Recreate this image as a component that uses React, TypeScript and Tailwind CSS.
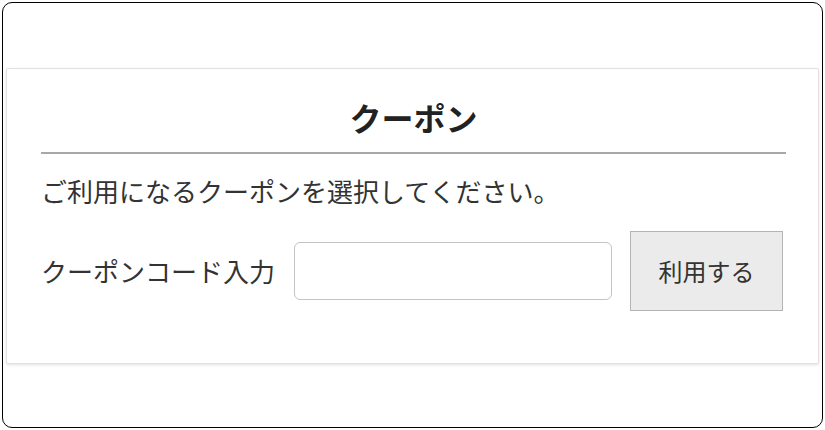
import React from "react";

export default function App() {
  return (
    <div
      className="w-[825px] h-[430px] bg-white p-[2px]"
      style={{ fontFamily: '"Noto Sans CJK JP", "Noto Sans", sans-serif' }}
    >
      <div className="h-full w-full rounded-[10px] border border-black pt-[65px] px-[3px]">
        <div className="border border-[#e2e2e2] rounded-[2px] shadow-[0_1px_3px_rgba(0,0,0,0.12)] pl-[34px] pr-[32px] pt-[28px] pb-[52px] bg-white">
          <div className="text-center text-[32px] leading-[40px] font-bold text-[#222] pb-[15px] border-b-2 border-[#a8a8a8]">
            クーポン
          </div>
          <p className="mt-[19px] text-[26px] leading-[36px] text-[#333]">
            ご利用になるクーポンを選択してください。
          </p>
          <div className="mt-[22px] flex items-center h-[80px]">
            <span className="text-[26px] leading-[36px] text-[#333] whitespace-nowrap">
              クーポンコード入力
            </span>
            <input
              type="text"
              className="ml-[19px] w-[318px] h-[58px] border border-[#c4c4c4] rounded-[6px] bg-white outline-none"
            />
            <button className="ml-[18px] w-[153px] h-[80px] border border-[#b4b4b4] bg-[#ebebeb] text-[24px] text-[#333]">
              利用する
            </button>
          </div>
        </div>
      </div>
    </div>
  );
}
